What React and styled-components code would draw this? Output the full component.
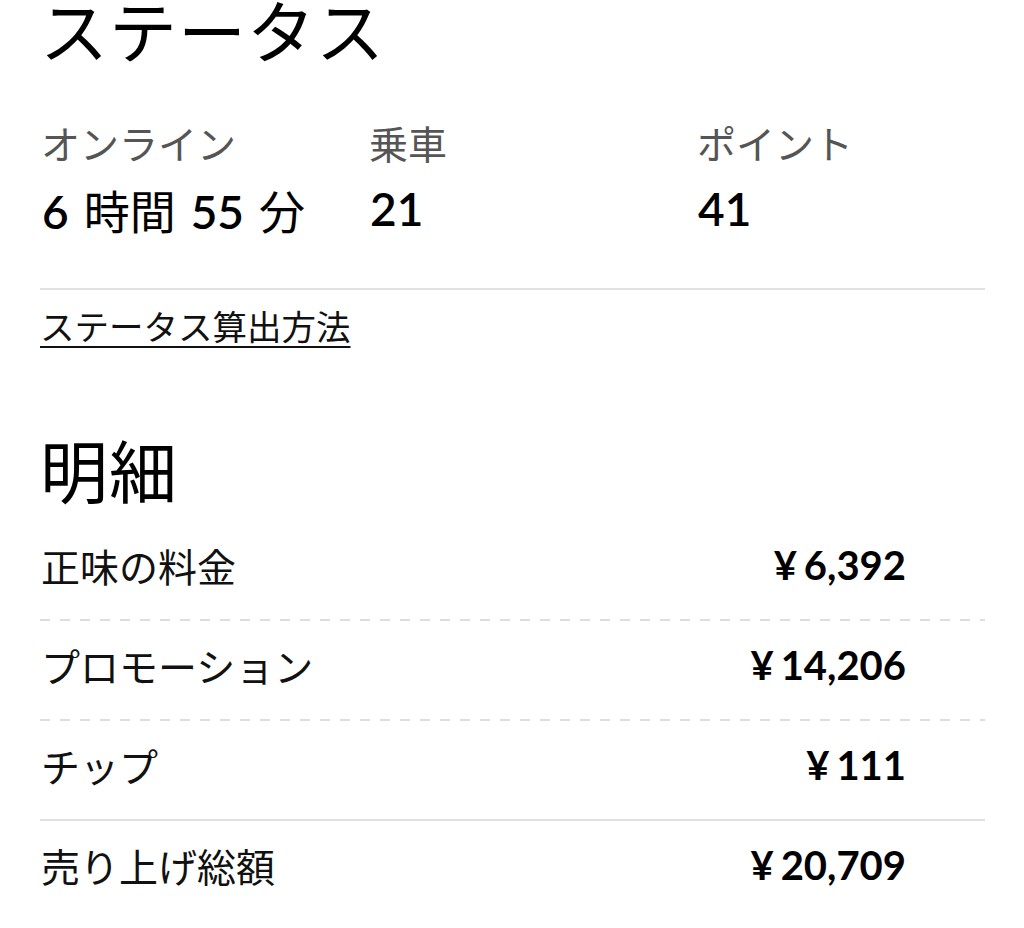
import React from "react";
import { styled, createGlobalStyle } from "styled-components";

const stats = [
  { label: "オンライン", value: [["6", true], ["時間", false], ["55", true], ["分", false]] },
  { label: "乗車", value: [["21", true]] },
  { label: "ポイント", value: [["41", true]] },
];

const rows = [
  { label: "正味の料金", amount: "6,392", line: "dashed" },
  { label: "プロモーション", amount: "14,206", line: "dashed" },
  { label: "チップ", amount: "111", line: "solid" },
  { label: "売り上げ総額", amount: "20,709", line: "none" },
];

const App = () => {
  return (
    <Page>
      <GlobalStyle />
      <Heading>ステータス</Heading>

      <StatGrid>
        {stats.map((s) => (
          <Stat key={s.label}>
            <StatLabel>{s.label}</StatLabel>
            <StatValue>
              {s.value.map(([text, num], i) =>
                num ? <Num key={i}>{text}</Num> : <Unit key={i}>{text}</Unit>
              )}
            </StatValue>
          </Stat>
        ))}
      </StatGrid>

      <Divider />

      <HelpLink href="#">ステータス算出方法</HelpLink>

      <Heading $top={93}>明細</Heading>

      <Breakdown>
        {rows.map((r) => (
          <Row key={r.label} $line={r.line}>
            <RowLabel>{r.label}</RowLabel>
            <Amount>
              <Yen>¥</Yen>
              {r.amount}
            </Amount>
          </Row>
        ))}
      </Breakdown>
    </Page>
  );
};

const GlobalStyle = createGlobalStyle`
  body {
    margin: 0;
    background: #ffffff;
    font-family: "Noto Sans CJK JP", "Noto Sans", sans-serif;
    color: #111;
  }
`;

const Page = styled.div`
  padding: 0 39px 40px 40px;
`;

const Heading = styled.h1`
  margin: ${(p) => p.$top || 0}px 0 0 0;
  font-size: 68px;
  font-weight: 400;
  line-height: 58px;
  letter-spacing: 1px;
  color: #000;
`;

const StatGrid = styled.div`
  display: grid;
  grid-template-columns: 328px 328px 1fr;
  margin-top: 62px;
  padding-left: 2px;
`;

const Stat = styled.div`
  display: flex;
  flex-direction: column;
`;

const StatLabel = styled.div`
  font-size: 39px;
  line-height: 44px;
  color: #555;
  margin-left: -1px;
`;

const StatValue = styled.div`
  display: flex;
  align-items: baseline;
  gap: 15px;
  margin: 21px 0 5px;
  height: 48px;
  color: #000;
`;

const Num = styled.span`
  font-family: "Lato", "Noto Sans", sans-serif;
  font-weight: 600;
  font-size: 46px;
  line-height: 48px;
`;

const Unit = styled.span`
  font-size: 46px;
  line-height: 48px;
`;

const Divider = styled.div`
  height: 2px;
  background: #e2e2e2;
  margin-top: 50px;
`;

const HelpLink = styled.a`
  display: inline-block;
  margin-top: 13px;
  font-size: 34.5px;
  line-height: 44px;
  color: #111;
  text-decoration: underline;
  text-decoration-thickness: 2px;
  text-underline-offset: 6px;
`;

const Breakdown = styled.div`
  margin-top: 23px;
`;

const Row = styled.div`
  display: flex;
  justify-content: space-between;
  align-items: center;
  height: 100px;
  box-sizing: border-box;
  padding: 0 79px 12px 0;
  position: relative;
  &::after {
    content: "";
    display: ${(p) => (p.$line === "none" ? "none" : "block")};
    position: absolute;
    left: 0;
    right: ${(p) => (p.$line === "dashed" ? 0 : 0)}px;
    bottom: 0;
    height: 2px;
    background: ${(p) =>
      p.$line === "dashed"
        ? "repeating-linear-gradient(to right, #dedede 0 10px, transparent 10px 20px)"
        : "#e0e0e0"};
  }
`;

const RowLabel = styled.div`
  font-size: 39px;
  line-height: 44px;
  color: #111;
  padding-left: 1px;
`;

const Amount = styled.div`
  font-family: "Lato", "Noto Sans", sans-serif;
  font-weight: 700;
  font-size: 40px;
  line-height: 44px;
  color: #000;
`;

const Yen = styled.span`
  margin-right: 7px;
`;

export default App;
